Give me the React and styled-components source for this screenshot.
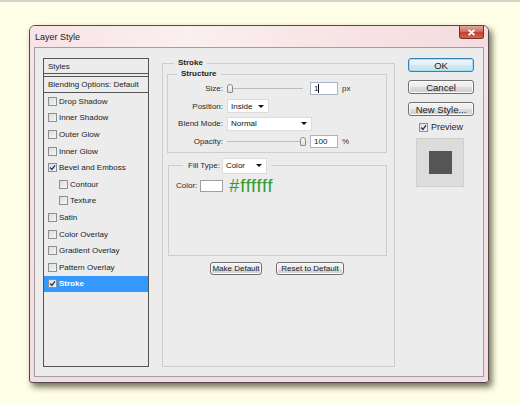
import styled, { createGlobalStyle } from "styled-components";

const GlobalStyle = createGlobalStyle`
  html, body {
    margin: 0;
    padding: 0;
  }
  body {
    background: #fffee6;
    font-family: "Liberation Sans", Arial, sans-serif;
    font-size: 8px;
    color: #202020;
  }
  * {
    box-sizing: border-box;
  }
`;

const effects = [
  { name: "Drop Shadow" },
  { name: "Inner Shadow" },
  { name: "Outer Glow" },
  { name: "Inner Glow" },
  { name: "Bevel and Emboss", checked: true },
  { name: "Contour", sub: true },
  { name: "Texture", sub: true },
  { name: "Satin" },
  { name: "Color Overlay" },
  { name: "Gradient Overlay" },
  { name: "Pattern Overlay" },
  { name: "Stroke", checked: true, active: true },
];

function Check({ checked, size = 9 }) {
  return (
    <CheckBox $size={size}>
      {checked && (
        <svg width={size - 2} height={size - 2} viewBox="0 0 7 7">
          <path d="M1 3.6 L2.9 5.4 L6 1.3" fill="none" stroke="#1b3b74" strokeWidth="1.4" />
        </svg>
      )}
    </CheckBox>
  );
}

function Dropdown({ width, value }) {
  return (
    <Select $width={width}>
      <span>{value}</span>
      <Arrow />
    </Select>
  );
}

function App() {
  return (
    <Page>
      <GlobalStyle />
      <Window>
        <TitleBar>
          <Title>Layer Style</Title>
          <CloseButton>
            <svg width="9" height="7" viewBox="0 0 9 7">
              <path d="M1.5 0.8 L7.5 6.2 M7.5 0.8 L1.5 6.2" stroke="#fff" strokeWidth="1.8" />
            </svg>
          </CloseButton>
        </TitleBar>
        <Frame>
          <Content>
            <StyleList>
              <ListHeader>Styles</ListHeader>
              <ListHeader $second>Blending Options: Default</ListHeader>
              {effects.map((fx) => (
                <ListRow key={fx.name} $sub={fx.sub} $active={fx.active}>
                  <Check checked={fx.checked} />
                  <span>{fx.name}</span>
                </ListRow>
              ))}
            </StyleList>

            <StrokeGroup>
              <Legend>Stroke</Legend>
              <Group>
                <Legend $inset={9}>Structure</Legend>
                <FieldGrid>
                  <Label>Size:</Label>
                  <Control>
                    <Slider $width={76}>
                      <Thumb />
                    </Slider>
                    <NumberInput>
                      1<Caret />
                    </NumberInput>
                    <Unit>px</Unit>
                  </Control>

                  <Label>Position:</Label>
                  <Control>
                    <Dropdown width={42} value="Inside" />
                  </Control>

                  <Label>Blend Mode:</Label>
                  <Control>
                    <Dropdown width={85} value="Normal" />
                  </Control>

                  <Label>Opacity:</Label>
                  <Control>
                    <Slider $width={79} $end>
                      <Thumb />
                    </Slider>
                    <NumberInput $gap={4}>100</NumberInput>
                    <Unit>%</Unit>
                  </Control>
                </FieldGrid>
              </Group>

              <FillGroup>
                <FillLegend>
                  <span>Fill Type:</span>
                  <Dropdown width={45} value="Color" />
                </FillLegend>
                <ColorRow>
                  <span>Color:</span>
                  <Swatch />
                  <HexValue>#ffffff</HexValue>
                </ColorRow>
              </FillGroup>

              <ButtonRow>
                <Button $compact $width={52}>Make Default</Button>
                <Button $compact $width={68}>Reset to Default</Button>
              </ButtonRow>
            </StrokeGroup>

            <Side>
              <Button $primary>OK</Button>
              <Button>Cancel</Button>
              <Button>New Style...</Button>
              <PreviewToggle>
                <Check checked size={9} />
                <span>Preview</span>
              </PreviewToggle>
              <PreviewBox>
                <PreviewSquare />
              </PreviewBox>
            </Side>
          </Content>
        </Frame>
      </Window>
    </Page>
  );
}

export default App;

const Page = styled.div`
  width: 520px;
  height: 404px;
  border-top: 2px solid #d3d3c9;
  padding: 23px 0 0 29px;
  background: #fffee6;
  overflow: hidden;
`;

const Window = styled.div`
  width: 460px;
  height: 358px;
  display: flex;
  flex-direction: column;
  border: 1px solid #4e4b4b;
  border-radius: 6px 6px 3px 3px;
  background: linear-gradient(180deg, #f6e4e6 0%, #f4e0e2 60%, #f3dde0 100%);
  box-shadow: 3px 4px 6px rgba(64, 62, 36, 0.75);
`;

const TitleBar = styled.div`
  height: 21px;
  display: flex;
  align-items: center;
  justify-content: space-between;
  padding-left: 5px;
  padding-right: 4px;
  border-radius: 5px 5px 0 0;
  background: linear-gradient(90deg, #f7e3e5 0%, #fbeff0 35%, #f8e6e7 60%, #f4dcdf 100%);
`;

const Title = styled.div`
  font-size: 9px;
  color: #1c1c1c;
`;

const CloseButton = styled.div`
  align-self: flex-start;
  width: 25px;
  height: 13px;
  display: flex;
  align-items: center;
  justify-content: center;
  border: 1px solid #7d2e24;
  border-top: none;
  border-radius: 0 0 3px 3px;
  background: linear-gradient(180deg, #e3a79c 0%, #d2705f 45%, #c0402d 55%, #cf6a4e 100%);
`;

const Frame = styled.div`
  flex: 1;
  padding: 0 4px 5px 4px;
  display: flex;
`;

const Content = styled.div`
  flex: 1;
  display: grid;
  grid-template-columns: 106px 233px 66px;
  column-gap: 13px;
  align-items: start;
  padding: 10px 0 0 8px;
  border: 1px solid #a29d9e;
  background: #ececec;
`;

const StyleList = styled.div`
  height: 309px;
  border: 1px solid #555;
  background: #ececec;
`;

const ListHeader = styled.div`
  height: ${(p) => (p.$second ? 17 : 15)}px;
  display: flex;
  align-items: center;
  padding-left: 4px;
  border-bottom: 1px solid #555;
  border-top: ${(p) => (p.$second ? "1px solid #555" : "none")};
  margin-top: ${(p) => (p.$second ? "2px" : "0")};
  color: #222;
`;

const ListRow = styled.div`
  height: 16.6px;
  display: flex;
  align-items: center;
  gap: 2px;
  padding-left: ${(p) => (p.$sub ? 15 : 4)}px;
  background: ${(p) => (p.$active ? "#3399ff" : "transparent")};
  color: ${(p) => (p.$active ? "#fff" : "#222")};
  font-weight: ${(p) => (p.$active ? "bold" : "normal")};
`;

const CheckBox = styled.span`
  width: ${(p) => p.$size}px;
  height: ${(p) => p.$size}px;
  flex-shrink: 0;
  display: inline-flex;
  align-items: center;
  justify-content: center;
  border: 1px solid #8e8f8f;
  background: linear-gradient(135deg, #dcdcdc 0%, #f6f6f6 100%);
`;

const StrokeGroup = styled.fieldset`
  margin: 0;
  height: 309px;
  min-width: 0;
  padding: 1px 7px 0 4px;
  border: 1px solid #cdcdcd;
`;

const Legend = styled.legend`
  margin-left: ${(p) => p.$inset || 7}px;
  padding: 0 4px;
  line-height: 10px;
  font-weight: bold;
  color: #1e1e1e;
`;

const Group = styled.fieldset`
  margin: 0;
  min-width: 0;
  padding: 3px 4px 4px 0;
  border: 1px solid #cdcdcd;
`;

const FieldGrid = styled.div`
  display: grid;
  grid-template-columns: 55px 1fr;
  column-gap: 4px;
  row-gap: 4.5px;
  grid-auto-rows: 13px;
  align-items: center;
`;

const Label = styled.span`
  text-align: right;
  color: #2a2a2a;
`;

const Control = styled.div`
  display: flex;
  align-items: center;
  height: 13px;
`;

const Slider = styled.div`
  width: ${(p) => p.$width}px;
  height: 13px;
  display: flex;
  align-items: center;
  justify-content: ${(p) => (p.$end ? "flex-end" : "flex-start")};
  background: linear-gradient(#bdbdbd, #bdbdbd) no-repeat center / 100% 1px;
`;

const Thumb = styled.span`
  width: 6px;
  height: 9px;
  border: 1px solid #8a8a8a;
  border-radius: 3px 3px 1px 1px;
  background: linear-gradient(180deg, #ffffff, #dedede);
`;

const NumberInput = styled.div`
  width: 28px;
  height: 13px;
  margin-left: ${(p) => p.$gap ?? 7}px;
  display: flex;
  align-items: center;
  padding-left: 3px;
  border: 1px solid #a7b5c8;
  background: #fff;
  color: #111;
`;

const Caret = styled.span`
  width: 1px;
  height: 9px;
  background: #000;
`;

const Unit = styled.span`
  margin-left: 4px;
  color: #333;
`;

const Select = styled.div`
  width: ${(p) => p.$width}px;
  height: 14px;
  display: flex;
  align-items: center;
  justify-content: space-between;
  padding: 0 4px 0 3px;
  border: 1px solid #dcdcdc;
  background: #fff;
  color: #111;
  font-weight: normal;
`;

const Arrow = styled.span`
  width: 0;
  height: 0;
  border-left: 3px solid transparent;
  border-right: 3px solid transparent;
  border-top: 3px solid #111;
`;

const FillGroup = styled.fieldset`
  margin: 5px 0 0 1px;
  min-width: 0;
  padding: 6px 7px 63px 7px;
  border: 1px solid #cdcdcd;
`;

const FillLegend = styled.legend`
  margin-left: 7px;
  padding: 0 4px 0 5px;
  display: flex;
  align-items: center;
  gap: 2px;
  height: 16px;
  color: #2a2a2a;

  > div {
    height: 16px;
  }
`;

const ColorRow = styled.div`
  height: 12px;
  display: flex;
  align-items: center;
  color: #2a2a2a;
`;

const Swatch = styled.span`
  width: 23px;
  height: 12px;
  margin-left: 3px;
  border: 1px solid #a0a0a0;
  background: #fff;
`;

const HexValue = styled.span`
  margin-left: 6px;
  font-size: 18px;
  letter-spacing: 0.8px;
  color: #2f9a2f;
  line-height: 12px;
`;

const ButtonRow = styled.div`
  display: flex;
  justify-content: center;
  gap: 14px;
  margin-top: 6px;
`;

const Button = styled.div`
  width: ${(p) => (p.$width ? `${p.$width}px` : "100%")};
  height: ${(p) => (p.$compact ? 13 : 14)}px;
  display: flex;
  align-items: center;
  justify-content: center;
  font-size: ${(p) => (p.$compact ? 8 : 9.5)}px;
  color: #1a1a1a;
  border: 1px solid ${(p) => (p.$primary ? "#3c7fb1" : "#707070")};
  border-radius: 3px;
  background: ${(p) =>
    p.$primary
      ? "linear-gradient(180deg, #eef7fc 0%, #e3f0f8 50%, #d3e7f3 51%, #c8e0ef 100%)"
      : "linear-gradient(180deg, #f3f3f3 0%, #ebebeb 50%, #dddddd 51%, #d0d0d0 100%)"};
  box-shadow: inset 0 0 0 1px ${(p) => (p.$primary ? "#9ee0f6" : "#fbfbfb")};
`;

const Side = styled.div`
  display: flex;
  flex-direction: column;
  gap: 8px;
`;

const PreviewToggle = styled.div`
  display: flex;
  align-items: center;
  gap: 3px;
  margin-top: -2px;
  padding-left: 11px;
  font-size: 9px;
  color: #1e1e1e;
`;

const PreviewBox = styled.div`
  width: 48px;
  height: 49px;
  margin: -2px 0 0 8px;
  display: flex;
  align-items: center;
  justify-content: center;
  border: 1px solid #cfcfcf;
  background: #dcdcdc;
`;

const PreviewSquare = styled.div`
  width: 23px;
  height: 23px;
  background: #555;
`;
